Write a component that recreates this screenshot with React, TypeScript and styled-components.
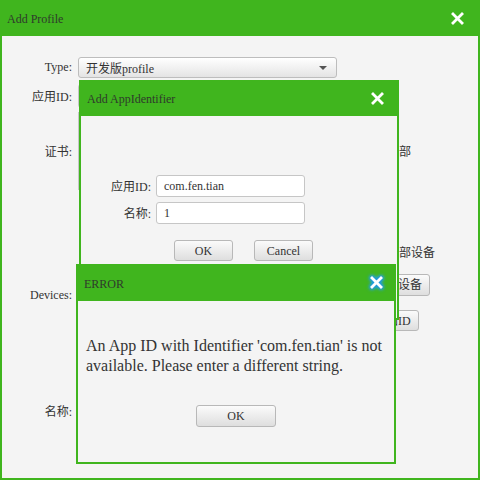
import React from "react";
import styled, { createGlobalStyle } from "styled-components";

const GREEN = "#40b51e";
const FONT = `"Liberation Serif", "Noto Sans CJK SC", serif`;

const Global = createGlobalStyle`
  html, body { margin: 0; padding: 0; background: #f4f4f4; }
  body { font-family: ${FONT}; color: #333; }
  * { box-sizing: border-box; }
`;

const Window = styled.div`
  position: relative;
  width: 480px;
  height: 480px;
  background: #f4f4f4;
  border: 2px solid ${GREEN};
  border-top: none;
  font-family: ${FONT};
  font-size: 12px;
  color: #333;
  overflow: hidden;
`;

const Header = styled.div<{ $h: number; $pl: number; $pr: number }>`
  display: flex;
  align-items: center;
  justify-content: space-between;
  height: ${(p) => p.$h}px;
  background: ${GREEN};
  padding: 3px ${(p) => p.$pr}px 0 ${(p) => p.$pl}px;
  margin: 0 -2px;
`;

const Title = styled.span`
  font-size: 12px;
  color: #2f3a2c;
`;

const CloseBtn = styled.span<{ $glow?: boolean }>`
  display: flex;
  width: 13px;
  height: 13px;
  margin-top: -3px;
  filter: ${(p) =>
    p.$glow
      ? "drop-shadow(0 0 1.5px #1596e0) drop-shadow(0 0 1.5px #1596e0) drop-shadow(0 0 1px #3aa8ea)"
      : "none"};
`;

const CloseIcon = ({ glow }: { glow?: boolean }) => (
  <CloseBtn $glow={glow}>
    <svg width="13" height="13" viewBox="0 0 13 13">
      <path d="M2 2 L11 11 M11 2 L2 11" stroke="#fff" strokeWidth="2.8" strokeLinecap="square" />
    </svg>
  </CloseBtn>
);

const Body = styled.div`
  padding-top: 21px;
`;

const Row = styled.div<{ $mt?: number }>`
  display: flex;
  align-items: center;
  margin-top: ${(p) => p.$mt ?? 0}px;
`;

const Label = styled.div<{ $gap?: number }>`
  width: 70px;
  text-align: right;
  margin-right: ${(p) => p.$gap ?? 6}px;
  flex-shrink: 0;
  white-space: nowrap;
`;

const Select = styled.div`
  width: 259px;
  height: 21px;
  border: 1px solid #bdbdbd;
  border-radius: 3px;
  background: linear-gradient(#ffffff, #e4e4e4);
  display: flex;
  align-items: center;
  justify-content: space-between;
  padding: 0 9px 0 7px;
`;

const Caret = styled.span`
  width: 0;
  height: 0;
  border-left: 4px solid transparent;
  border-right: 4px solid transparent;
  border-top: 4px solid #555;
`;

const TextBox = styled.div<{ $w: number; $h: number }>`
  width: ${(p) => p.$w}px;
  height: ${(p) => p.$h}px;
  border: 1px solid #c6c6c6;
  border-radius: 3px;
  background: #fff;
  display: flex;
  align-items: center;
  padding-left: 7px;
`;

const ListBox = styled.div`
  width: 280px;
  height: 78px;
  border: 1px solid #c6c6c6;
  background: #fff;
`;

const Radio = styled.label<{ $ml?: number }>`
  display: flex;
  align-items: center;
  gap: 4px;
  height: 24px;
  margin-left: ${(p) => p.$ml ?? 0}px;
  font-size: 12px;
`;

const Dot = styled.span`
  width: 13px;
  height: 13px;
  border-radius: 50%;
  border: 1px solid #999;
  background: #fff;
`;

const DeviceCol = styled.div`
  display: flex;
  flex-direction: column;
  align-items: flex-start;
  margin-left: 286px;
  height: 110px;
`;

const Button = styled.button<{ $w?: number; $h?: number; $mt?: number; $ml?: number }>`
  font-family: ${FONT};
  font-size: 12px;
  color: #333;
  height: ${(p) => p.$h ?? 21}px;
  ${(p) => (p.$w ? `width: ${p.$w}px; padding: 0;` : "padding: 0 7px;")}
  margin-top: ${(p) => p.$mt ?? 0}px;
  margin-left: ${(p) => p.$ml ?? 0}px;
  border: 1px solid #b8b8b8;
  border-radius: 3px;
  background: linear-gradient(#fbfbfb, #dedede);
  line-height: 1;
  cursor: default;
`;

const Dialog = styled.div<{ $x: number; $y: number; $h: number }>`
  position: absolute;
  left: ${(p) => p.$x}px;
  top: ${(p) => p.$y}px;
  width: 320px;
  height: ${(p) => p.$h}px;
  border: 2px solid ${GREEN};
  border-top: none;
  background: #f4f4f4;
`;

const DialogBody = styled.div<{ $pt: number }>`
  padding-top: ${(p) => p.$pt}px;
`;

const FormRow = styled.div<{ $mt?: number }>`
  display: flex;
  align-items: center;
  margin-top: ${(p) => p.$mt ?? 0}px;
`;

const ButtonRow = styled.div<{ $ml: number; $mt: number; $gap: number }>`
  display: flex;
  gap: ${(p) => p.$gap}px;
  margin-left: ${(p) => p.$ml}px;
  margin-top: ${(p) => p.$mt}px;
`;

const Message = styled.p`
  margin: 0;
  padding: 0 6px 0 8px;
  font-size: 16px;
  line-height: 20px;
  color: #333;
`;

const Center = styled.div<{ $mt: number }>`
  display: flex;
  justify-content: center;
  margin-top: ${(p) => p.$mt}px;
`;

export default function App() {
  return (
    <>
      <Global />
      <Window>
        <Header $h={36} $pl={7} $pr={16}>
          <Title>Add Profile</Title>
          <CloseIcon />
        </Header>
        <Body>
          <Row>
            <Label>Type:</Label>
            <Select>
              <span>开发版profile</span>
              <Caret />
            </Select>
          </Row>
          <Row $mt={6}>
            <Label>应用ID:</Label>
            <TextBox $w={259} $h={24} />
          </Row>
          <Row $mt={4}>
            <Label>证书:</Label>
            <ListBox />
            <Radio $ml={12}>
              <Dot />
              全部
            </Radio>
          </Row>
          <Row $mt={50}>
            <Label>Devices:</Label>
            <DeviceCol>
              <Radio $ml={6}>
                <Dot />
                全部设备
              </Radio>
              <Button $h={22} $mt={10} $ml={2}>选择设备</Button>
              <Button $h={21} $mt={14} $ml={2}>添加ID</Button>
            </DeviceCol>
          </Row>
          <Row $mt={50}>
            <Label>名称:</Label>
            <TextBox $w={259} $h={22} />
          </Row>
        </Body>

        <Dialog $x={77} $y={80} $h={240}>
          <Header $h={36} $pl={8} $pr={15}>
            <Title>Add AppIdentifier</Title>
            <CloseIcon />
          </Header>
          <DialogBody $pt={59}>
            <FormRow>
              <Label $gap={5}>应用ID:</Label>
              <TextBox $w={149} $h={22}>com.fen.tian</TextBox>
            </FormRow>
            <FormRow $mt={5}>
              <Label $gap={5}>名称:</Label>
              <TextBox $w={149} $h={22}>1</TextBox>
            </FormRow>
            <ButtonRow $ml={93} $mt={16} $gap={21}>
              <Button $w={59}>OK</Button>
              <Button $w={59}>Cancel</Button>
            </ButtonRow>
          </DialogBody>
        </Dialog>

        <Dialog $x={74} $y={264} $h={200}>
          <Header $h={37} $pl={8} $pr={13}>
            <Title>ERROR</Title>
            <CloseIcon glow />
          </Header>
          <DialogBody $pt={35}>
            <Message>
              An App ID with Identifier 'com.fen.tian' is not available. Please enter a
              different string.
            </Message>
            <Center $mt={29}>
              <Button $w={80} $h={22}>OK</Button>
            </Center>
          </DialogBody>
        </Dialog>
      </Window>
    </>
  );
}
